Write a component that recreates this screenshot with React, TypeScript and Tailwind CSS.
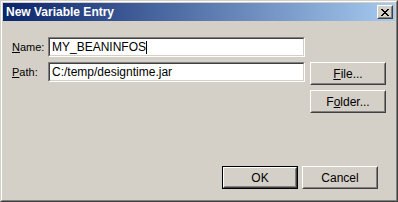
const font = { fontFamily: '"Liberation Sans", Arial, sans-serif' };

const Button = ({ children, isDefault = false }: { children: React.ReactNode; isDefault?: boolean }) => (
  <div className={`w-[76px] h-[23px] ${isDefault ? 'border border-black' : ''}`}>
    <div className="w-full h-full border border-t-white border-l-white border-r-[#404040] border-b-[#404040]">
      <div className="w-full h-full border border-t-[#d4d0c8] border-l-[#d4d0c8] border-r-[#808080] border-b-[#808080] flex items-center justify-center text-[12px] text-black bg-[#d4d0c8]">
        {children}
      </div>
    </div>
  </div>
);

const Field = ({ value, caret = false }: { value: string; caret?: boolean }) => (
  <div className="w-[257px] h-[20px] border border-t-[#808080] border-l-[#808080] border-r-white border-b-white">
    <div className="w-full h-full border border-t-[#404040] border-l-[#404040] border-r-[#d4d0c8] border-b-[#d4d0c8] bg-white flex items-center px-[2px] text-[12px] text-black">
      <span>{value}</span>
      {caret && <span className="w-px h-[13px] bg-black" />}
    </div>
  </div>
);

export default function App() {
  return (
    <div className="w-[398px] h-[202px] bg-[#d4d0c8]" style={font}>
      <div className="w-full h-full border border-t-[#d4d0c8] border-l-[#d4d0c8] border-r-[#404040] border-b-[#404040]">
        <div className="w-full h-full border border-t-white border-l-white border-r-[#808080] border-b-[#808080] p-px flex flex-col">
          {/* title bar */}
          <div className="h-[18px] flex items-center justify-between pl-[3px] pr-[2px] bg-[linear-gradient(to_right,#0a246a,#a6caf0)]">
            <span className="text-white font-bold text-[12px] leading-none">New Variable Entry</span>
            <div className="w-[16px] h-[14px] border border-t-white border-l-white border-r-[#404040] border-b-[#404040]">
              <div className="w-full h-full border border-t-[#d4d0c8] border-l-[#d4d0c8] border-r-[#808080] border-b-[#808080] bg-[#d4d0c8] flex items-center justify-center">
                <svg width="8" height="7" viewBox="0 0 8 7">
                  <path d="M0 0h2v1h1v1h2V1h1V0h2v1H7v1H6v1H5v1h1v1h1v1h1v1H6V6H5V5H3v1H2v1H0V6h1V5h1V4h1V3H2V2H1V1H0z" fill="#000" />
                </svg>
              </div>
            </div>
          </div>

          {/* body */}
          <div className="flex-1 flex flex-col pl-[9px] pt-[16px] text-[11px] text-black">
            <div className="flex items-center">
              <span className="w-[36px]"><u>N</u>ame:</span>
              <Field value="MY_BEANINFOS" caret />
            </div>
            <div className="flex items-start mt-[5px]">
              <span className="w-[36px] h-[20px] flex items-center"><u>P</u>ath:</span>
              <Field value="C:/temp/designtime.jar" />
              <div className="ml-[5px] flex flex-col gap-[5px]">
                <Button><u>F</u>ile...</Button>
                <Button>F<u>o</u>lder...</Button>
              </div>
            </div>
            <div className="flex-1" />
            <div className="flex justify-end gap-[4px] pr-[17px] pb-[10px]">
              <Button isDefault>OK</Button>
              <Button>Cancel</Button>
            </div>
          </div>
        </div>
      </div>
    </div>
  );
}
